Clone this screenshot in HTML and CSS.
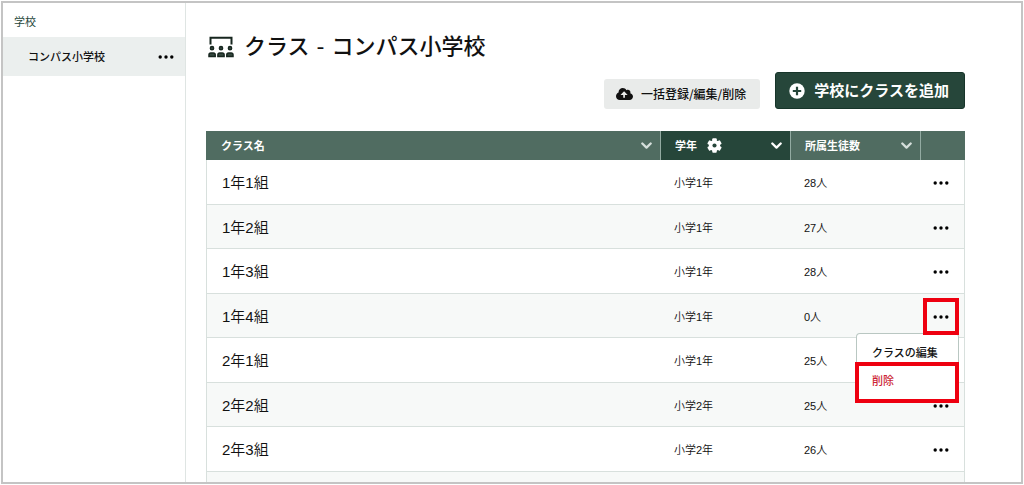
FILE: index.html
```html
<!DOCTYPE html>
<html lang="ja">
<head>
<meta charset="utf-8">
<meta name="viewport" content="width=device-width, initial-scale=1">
<title>クラス - コンパス小学校</title>
<link rel="stylesheet" href="styles.css">
</head>
<body>
<svg class="defs" aria-hidden="true">
  <symbol id="dots" viewBox="0 0 16 4"><circle cx="2.200" cy="2" r="1.700"/><circle cx="8" cy="2" r="1.700"/><circle cx="13.800" cy="2" r="1.700"/></symbol>
  <symbol id="chevron" viewBox="0 0 10 8"><path d="M1.200 2.200 5 5.900 8.800 2.200" fill="none" stroke="currentColor" stroke-width="2.100" stroke-linecap="round" stroke-linejoin="round"/></symbol>
</svg>
<div class="frame">
  <nav class="sidebar">
    <h2 class="sidebar-title">学校</h2>
    <div class="school">
      <a class="school-link" href="#">コンパス小学校</a>
      <button class="more" aria-label="学校メニュー"><svg><use href="#dots"/></svg></button>
    </div>
  </nav>
  <main class="main">
    <h1 class="title">
      <svg class="title-icon" viewBox="0 0 26 22" aria-hidden="true">
        <path d="M2.500 8.500V1.800h21v6.700" fill="none" stroke="currentColor" stroke-width="2"/>
        <g fill="#35483f" stroke="currentColor" stroke-width="1.500">
          <circle cx="4" cy="12.200" r="1.600"/><circle cx="13" cy="12.200" r="1.600"/><circle cx="22" cy="12.200" r="1.600"/>
          <path d="M1 20.500v-1.700q0-1.800 1.800-1.800h2.600q1.800 0 1.800 1.800v1.700zM9.900 20.500v-1.700q0-1.800 1.800-1.800h2.600q1.800 0 1.800 1.800v1.700zM18.800 20.500v-1.700q0-1.800 1.800-1.800h2.600q1.800 0 1.800 1.800v1.700z"/>
        </g>
      </svg>
      クラス - コンパス小学校
    </h1>
    <div class="actions">
      <button class="btn btn-bulk">
        <svg viewBox="0 0 640 448" aria-hidden="true"><path fill="currentColor" d="M537.600 194.600C541.700 183.700 544 172.100 544 160c0-53-43-96-96-96-19.700 0-38.100 6-53.300 16.200C367 32.200 315.300 0 256 0 167.600 0 96 71.600 96 160c0 2.700.1 5.400.2 8.100C40.200 187.800 0 241.200 0 304c0 79.500 64.500 144 144 144h368c70.700 0 128-57.300 128-128 0-61.900-44-113.600-102.400-125.400z"/><path d="M304 365V200" fill="none" stroke="#e9ebea" stroke-width="64"/><path d="M304 125l135 140H169z" fill="#e9ebea"/></svg>
        一括登録/編集/削除
      </button>
      <button class="btn btn-add">
        <svg viewBox="0 0 16 16" aria-hidden="true"><circle cx="8" cy="8" r="7.700" fill="#fff"/><path d="M8 3.800v8.400M3.800 8h8.400" stroke="#26463a" stroke-width="2.200"/></svg>
        学校にクラスを追加
      </button>
    </div>
    <table class="classes">
      <colgroup><col><col class="col-mid"><col class="col-mid"><col class="col-more"></colgroup>
      <thead>
        <tr>
          <th scope="col"><div class="head">クラス名<button class="sort" aria-label="クラス名で並べ替え"><svg><use href="#chevron"/></svg></button></div></th>
          <th scope="col" class="active"><div class="head">学年
            <button class="gear" aria-label="学年の設定"><svg viewBox="0 0 16 16"><g fill="currentColor"><rect x="5.600" y=".3" width="4.800" height="15.400" rx="1"/><rect x="5.600" y=".3" width="4.800" height="15.400" rx="1" transform="rotate(60 8 8)"/><rect x="5.600" y=".3" width="4.800" height="15.400" rx="1" transform="rotate(120 8 8)"/><circle cx="8" cy="8" r="6"/></g><circle cx="8" cy="8" r="2.200" fill="#26463a"/></svg></button>
            <button class="sort" aria-label="学年で並べ替え"><svg><use href="#chevron"/></svg></button></div></th>
          <th scope="col"><div class="head">所属生徒数<button class="sort" aria-label="所属生徒数で並べ替え"><svg><use href="#chevron"/></svg></button></div></th>
          <th></th>
        </tr>
      </thead>
      <tbody>
        <tr><td class="name">1年1組</td><td>小学1年</td><td>28人</td><td class="tools"><button class="more" aria-label="メニュー"><svg><use href="#dots"/></svg></button></td></tr>
        <tr><td class="name">1年2組</td><td>小学1年</td><td>27人</td><td class="tools"><button class="more" aria-label="メニュー"><svg><use href="#dots"/></svg></button></td></tr>
        <tr><td class="name">1年3組</td><td>小学1年</td><td>28人</td><td class="tools"><button class="more" aria-label="メニュー"><svg><use href="#dots"/></svg></button></td></tr>
        <tr><td class="name">1年4組</td><td>小学1年</td><td>0人</td><td class="tools"><button class="more marked" aria-label="メニュー" aria-expanded="true"><svg><use href="#dots"/></svg></button>
          <div class="menu"><button class="menu-item">クラスの編集</button><button class="menu-item danger">削除</button></div></td></tr>
        <tr><td class="name">2年1組</td><td>小学1年</td><td>25人</td><td class="tools"><button class="more" aria-label="メニュー"><svg><use href="#dots"/></svg></button></td></tr>
        <tr><td class="name">2年2組</td><td>小学2年</td><td>25人</td><td class="tools"><button class="more" aria-label="メニュー"><svg><use href="#dots"/></svg></button></td></tr>
        <tr><td class="name">2年3組</td><td>小学2年</td><td>26人</td><td class="tools"><button class="more" aria-label="メニュー"><svg><use href="#dots"/></svg></button></td></tr>
        <tr><td></td><td></td><td></td><td></td></tr>
      </tbody>
    </table>
  </main>
</div>
</body>
</html>
```
FILE: styles.css
```css
* { box-sizing: border-box; }

body {
  margin: 0;
  padding: 1px;
  background: #fff;
  color: #111;
  font: 11px/16px "Liberation Sans", "Noto Sans CJK JP", sans-serif;
}

button {
  margin: 0;
  padding: 0;
  border: 0;
  background: none;
  color: inherit;
  font: inherit;
  cursor: pointer;
}

svg { display: block; flex: none; }
.defs { position: absolute; width: 0; height: 0; }

.frame {
  display: flex;
  height: calc(100vh - 2px);
  overflow: hidden;
  border: 2px solid #c4c4c4;
}

.sidebar {
  flex: none;
  width: 183px;
  border-right: 1px solid #dfe5e3;
}

.sidebar-title {
  margin: 0;
  padding: 11px 11px 7px;
  color: #26463a;
  font-size: 11px;
  font-weight: 400;
}

.school {
  display: flex;
  align-items: center;
  justify-content: space-between;
  height: 39px;
  padding: 0 11px 0 25px;
  background: #ebefee;
}

.school-link {
  color: #111;
  font-weight: 500;
  text-decoration: none;
}

.more {
  display: inline-flex;
  align-items: center;
  justify-content: center;
}

.more svg { width: 16px; height: 4px; }

.main {
  flex: 1;
  min-width: 0;
  padding: 30px 56px 0 20px;
}

.title {
  display: flex;
  align-items: center;
  gap: 10px;
  margin: 0;
  padding-left: 2px;
  font-family: "DejaVu Sans", "Noto Sans CJK JP", sans-serif;
  font-size: 22px;
  font-weight: 500;
  line-height: 28px;
}

.title-icon { width: 26px; height: 22px; color: #17261f; }

.actions {
  display: flex;
  align-items: flex-end;
  justify-content: flex-end;
  gap: 15px;
  margin: 11px 0 22px;
}

.btn {
  display: flex;
  align-items: center;
  border-radius: 3px;
}

.btn-bulk {
  gap: 8px;
  height: 30px;
  padding: 0 14px 0 12px;
  background: #e9ebea;
  font-family: "Noto Sans CJK JP", sans-serif;
  font-size: 12px;
  font-weight: 500;
}

.btn-bulk svg { width: 17px; height: 12px; }

.btn-add {
  gap: 9px;
  height: 37px;
  padding: 0 15px 0 13px;
  border: 1px solid #17352a;
  background: #26463a;
  color: #fff;
  font-size: 15px;
  font-weight: 700;
}

.btn-add svg { width: 16px; height: 16px; }

.classes {
  width: 100%;
  table-layout: fixed;
  border-collapse: separate;
  border-spacing: 0;
}

.col-mid { width: 130px; }
.col-more { width: 45px; }

th {
  height: 29px;
  padding: 0 8px 0 14px;
  border-left: 1px solid #93aba2;
  background: #506c61;
  color: #fff;
  font-weight: 700;
  text-align: left;
}

th:first-child { border-left-color: #506c61; }
th.active { background: #26463a; }

.head { display: flex; align-items: center; }
.gear { margin-left: 10px; }
.gear svg { width: 15px; height: 15px; }
.sort { margin-left: auto; color: #d5dfdb; }
.active .sort { color: #fff; }
.sort svg { width: 11px; height: 9px; }

td {
  height: 44px;
  padding: 2px 0 0 14px;
  border-bottom: 1px solid #d8e0dd;
  font-weight: 350;
}

tr:nth-child(odd) td { height: 45px; }
tr:nth-child(even) td { background: #f7f9f8; }
td:first-child { padding-left: 15px; border-left: 1px solid #d8e0dd; }
td:last-child { border-right: 1px solid #d8e0dd; }

.name { font-size: 15px; }

.tools {
  position: relative;
  padding: 2px 2px 0 0;
  text-align: center;
}

.tools .more {
  width: 36px;
  height: 37px;
  vertical-align: middle;
}

.tools .marked {
  position: relative;
  z-index: 2;
  border: 4px solid #ee0010;
}

.menu {
  position: absolute;
  z-index: 1;
  top: 39px;
  right: 5px;
  display: flex;
  flex-direction: column;
  width: 103px;
  padding-top: 10px;
  border: 1px solid #b9c7c2;
  border-bottom: 0;
  border-radius: 4px 4px 0 0;
  background: #fff;
}

.menu-item {
  height: 18px;
  padding-left: 15px;
  font-weight: 500;
  text-align: left;
}

.danger {
  height: 41px;
  margin: 0 -1px 0 -2px;
  padding: 0 0 3px 13px;
  border: 4px solid #ee0010;
  background: #fff;
  color: #cc1f36;
}
```
